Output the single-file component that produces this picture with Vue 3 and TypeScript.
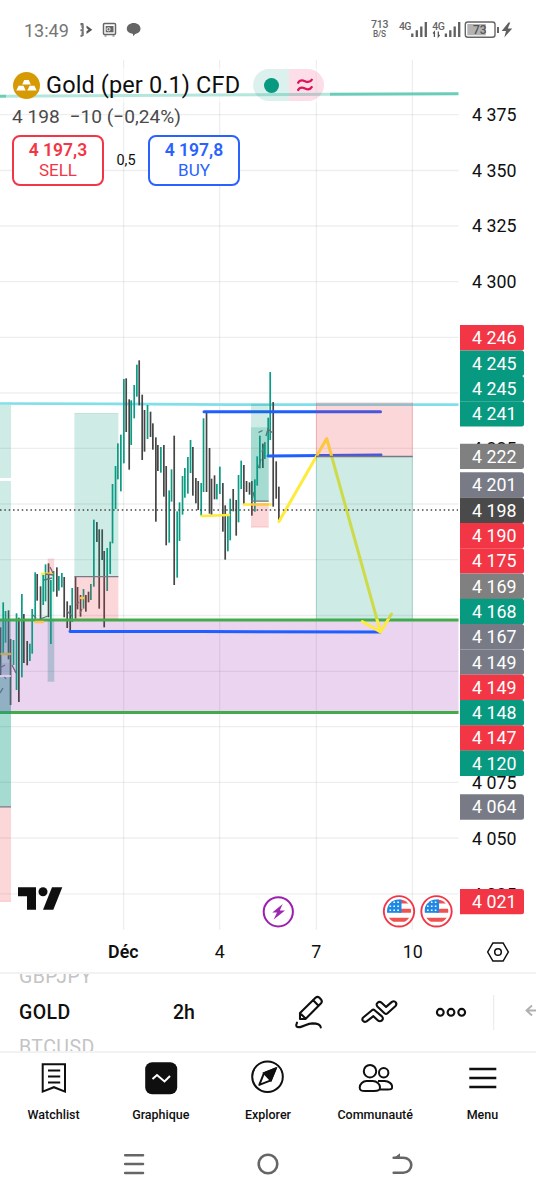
<script setup lang="ts">
type Candle = [x: number, high: number, low: number, up: 0 | 1]
interface Tag { y: number; text: string; tone: string }

const RED = '#f23645'
const GREEN = '#089981'
const GREY = '#808080'
const SLATE = '#787b86'

const gridX = [123.6, 219.6, 316.4, 412.4]
const gridY = [114.6, 170.5, 226, 281.6, 337.4, 393, 448.3, 504, 559.7, 615.5, 671.3, 726.6, 782.3, 838, 893.8]

const ticks = [
  { y: 114.6, text: '4 375' }, { y: 170.5, text: '4 350' }, { y: 226, text: '4 325' },
  { y: 281.6, text: '4 300' }, { y: 448.6, text: '4 225' }, { y: 782.6, text: '4 075' },
  { y: 838.2, text: '4 050' }, { y: 894.2, text: '4 025' },
]

const tags: Tag[] = [
  { y: 337.8, text: '4 246', tone: RED }, { y: 363.2, text: '4 245', tone: GREEN },
  { y: 388.6, text: '4 245', tone: GREEN }, { y: 413.9, text: '4 241', tone: GREEN },
  { y: 456.4, text: '4 222', tone: GREY }, { y: 484.9, text: '4 201', tone: SLATE },
  { y: 510.2, text: '4 198', tone: '#4a4a4a' }, { y: 535.6, text: '4 190', tone: RED },
  { y: 560.9, text: '4 175', tone: RED }, { y: 586.2, text: '4 169', tone: GREY },
  { y: 611.5, text: '4 168', tone: GREEN }, { y: 636.8, text: '4 167', tone: SLATE },
  { y: 662.1, text: '4 149', tone: SLATE }, { y: 687.4, text: '4 149', tone: RED },
  { y: 712.7, text: '4 148', tone: GREEN }, { y: 738, text: '4 147', tone: RED },
  { y: 763.3, text: '4 120', tone: GREEN }, { y: 807, text: '4 064', tone: SLATE },
  { y: 901.6, text: '4 021', tone: RED },
]

// Bars on a device-pixel grid: three units to one CSS pixel, y counted from 340.
const bars: Candle[] = [
  [1, 862, 1006, 0], [9, 787, 942, 1], [16, 813, 908, 1], [25, 811, 958, 0], [31, 897, 1095, 0],
  [40, 900, 975, 1], [49, 820, 1050, 1], [56, 833, 1086, 0], [65, 762, 1012, 1], [71, 822, 969, 0],
  [81, 903, 976, 0], [89, 911, 963, 1], [96, 807, 941, 1], [105, 697, 840, 1], [111, 702, 782, 0],
  [121, 739, 848, 0], [129, 705, 795, 1], [136, 673, 784, 1], [145, 670, 832, 0], [152, 720, 912, 1],
  [160, 693, 755, 1], [170, 682, 770, 0], [176, 708, 752, 1], [185, 699, 742, 1], [192, 711, 832, 0],
  [201, 784, 864, 0], [210, 796, 875, 0], [216, 744, 846, 1], [226, 710, 836, 0], [232, 741, 808, 0],
  [241, 765, 830, 0], [250, 747, 806, 1], [257, 765, 815, 0], [265, 755, 787, 0], [272, 732, 780, 1],
  [281, 539, 740, 1], [290, 546, 606, 0], [297, 568, 806, 0], [306, 568, 660, 0], [312, 633, 862, 0],
  [321, 624, 753, 1], [330, 605, 702, 1], [337, 432, 610, 1], [346, 378, 507, 1], [353, 310, 418, 1],
  [362, 284, 454, 1], [371, 117, 370, 1], [378, 115, 276, 0], [387, 178, 389, 0], [393, 181, 315, 1],
  [402, 135, 235, 1], [410, 74, 170, 1], [417, 61, 196, 0], [426, 164, 360, 0], [433, 210, 335, 0],
  [442, 195, 297, 1], [451, 215, 291, 0], [458, 250, 329, 0], [467, 292, 545, 0], [473, 315, 393, 0],
  [482, 321, 398, 1], [491, 315, 470, 0], [498, 378, 616, 0], [507, 451, 608, 1], [514, 388, 485, 1],
  [522, 287, 735, 0], [531, 514, 713, 1], [538, 487, 603, 1], [547, 408, 524, 1], [554, 384, 473, 1],
  [563, 351, 461, 1], [571, 300, 399, 1], [578, 321, 467, 0], [587, 414, 490, 0], [594, 423, 510, 0],
  [603, 429, 527, 1], [610, 235, 456, 1], [619, 215, 456, 0], [628, 324, 521, 0], [634, 416, 525, 0],
  [643, 406, 478, 0], [650, 432, 478, 1], [659, 380, 462, 1], [668, 429, 575, 0], [675, 496, 659, 0],
  [683, 524, 634, 1], [690, 476, 601, 1], [699, 447, 514, 0], [708, 480, 587, 0], [715, 405, 547, 1],
  [723, 362, 447, 1], [731, 375, 494, 0], [739, 423, 456, 0], [748, 427, 464, 0], [755, 423, 527, 0],
  [764, 418, 515, 1], [771, 349, 437, 1], [779, 287, 385, 1], [788, 311, 384, 0], [794, 308, 357, 1],
  [804, 233, 347, 1], [810, 96, 300, 1], [819, 186, 500, 0], [828, 364, 476, 0], [836, 440, 545, 0],
]
const candles = bars.map(([x, high, low, up]) => ({
  x: x / 3 - 0.65, y: 340 + high / 3, h: (low - high) / 3, fill: up ? '#0c9b83' : '#454545',
}))

const days = [
  { x: 123.3, text: 'Déc', strong: true }, { x: 219.7, text: '4', strong: false },
  { x: 316.3, text: '7', strong: false }, { x: 412.7, text: '10', strong: false },
]
const flags = [399, 436.5]
const tabs = ['Watchlist', 'Graphique', 'Explorer', 'Communauté', 'Menu']
</script>

<template>
  <div class="screen">
    <header class="status">
      <span class="clock">13:49</span>
      <svg class="notices" width="64" height="16" viewBox="0 0 64 16">
        <path d="M1.500 1h2.500v2.400h-2.500zm1 3h2v2h-2zm-1 3.200h2v2h-2zm1 3h2v2h-2zm-1 2.600h2v2h-2z" fill="#666" />
        <path d="M3.800 1.500v12.500" stroke="#777" stroke-width="1.800" />
        <path d="M7.500 3.500l5.800 4.200-5.800 4.200v-2.600l2-1.600-2-1.600z" fill="#555" />
        <rect x="24.500" y="1.500" width="12" height="11" rx="1" fill="none" stroke="#666" stroke-width="1.500" />
        <rect x="26.700" y="4" width="7.800" height="6.300" fill="#666" />
        <circle cx="29.500" cy="7.200" r="1.600" fill="#666" stroke="#fff" stroke-width=".9" />
        <path d="M33 4.500v5M25.500 14h2m6 0h2" stroke="#666" />
        <path d="M54.700 1c3.800 0 6.800 2.300 6.800 5.600 0 3.500-2.800 5-5.300 5.300L54 14.300v-2.400c-3.500-.3-6.200-2-6.200-5.300C47.800 3.300 51 1 54.700 1z" fill="#656565" />
      </svg>
      <svg class="signals" width="150" height="28" viewBox="366 16 150 28">
        <g fill="#666" font-size="10.500" font-weight="500">
          <text x="371" y="28" textLength="17.500">713</text>
          <text x="373" y="36.700" font-size="8.300" textLength="13">B/S</text>
          <text x="399" y="29.600" textLength="12.500">4G</text>
          <text x="432.300" y="29.600" textLength="12.500">4G</text>
        </g>
        <g stroke="#606060" stroke-width="2.300">
          <path d="M412.300 33.500V37M416.800 30.300V37M421.300 26.600V37M425.800 22V37" />
          <path d="M445.900 33.500V37M450.300 30.300V37M454.700 26.600V37M459.200 22V37" />
        </g>
        <path d="M434.400 37v-5l-1.300 1.500M438.300 31.500v5l1.300-1.500" fill="none" stroke="#555" stroke-width="1.300" />
        <rect x="465.300" y="22" width="29.700" height="15.300" rx="2.500" fill="#fff" stroke="#666" stroke-width="1.400" />
        <rect x="467.300" y="24" width="18.500" height="11.300" fill="#b3b3b3" />
        <path d="M498 27v6" stroke="#666" stroke-width="2" />
        <text x="473" y="34" font-size="12" font-weight="500" fill="#555" textLength="13.500">73</text>
        <path d="M508.500 22.500L501.700 31h4.300l-1.700 6.500 8-9h-4.500l2.500-6z" fill="#606060" />
      </svg>
    </header>

    <main class="chart">
      <svg class="plot" width="536" height="912" viewBox="0 60 536 912">
        <defs>
          <clipPath id="disc"><circle r="12" /></clipPath>
        </defs>
        <g stroke="#000" stroke-opacity=".065" stroke-width="1.300">
          <line v-for="x in gridX" :key="x" :x1="x" :x2="x" y1="60" y2="930" />
          <line v-for="y in gridY" :key="y" x1="0" x2="458.500" :y1="y" :y2="y" />
        </g>

        <path d="M0 96.200L330 94.300 458.500 93.700" fill="none" stroke="#6accb9" stroke-width="3" />
        <path d="M0 403.500L110 403.800 230 404.600H458.500" fill="none" stroke="#80dfe9" stroke-width="2.700" />
        <rect x="0" y="620" width="458.500" height="92.500" fill="#9c27b0" fill-opacity=".2" />

        <g>
          <rect v-for="c in candles" :key="c.x" :x="c.x" :y="c.y" width="1.700" :height="c.h" :fill="c.fill" />
        </g>

        <path d="M0 620H458.500M0 712.500H458.500" stroke="#43ac4a" stroke-width="2.800" />
        <g stroke="#1f5eff" stroke-width="3" stroke-linecap="round" fill="none">
          <path d="M204 411.700H380.500M268 456L381 454.900M70 631.400L200 631.600 380 632" />
        </g>

        <g stroke="#ffeb3b" stroke-width="3" stroke-linecap="round" stroke-linejoin="round" fill="none">
          <path d="M279 521.500L326.700 438.500 380.500 632M362.300 621.500L380.500 632 391.500 614" />
          <path d="M201.500 516L229 515M244 504.600H270.500M42 573.700H52M81 598H83.500" stroke-width="2.500" />
          <path d="M35.500 622H43M1.500 654H10" stroke="#ffc14d" stroke-width="2.500" />
        </g>

        <g fill="none" stroke="#6c6c76" stroke-width="1.300">
          <path d="M33 615l3 3M40 619l8-3M44 580l8-2M50 567l3 6M45 574l8 1M67 611l5 5M80 613l2-4M76 605l3-3" />
          <path d="M258.500 432.500l4-2M266 436l2-7 4 3.500M258.500 468l2.500-9M252 500l2-8M262 452l3-10" />
          <path d="M12 665l4 8M0 668l5-3M4 676l2 3M0 693l3-5" stroke="#755b85" />
        </g>

        <g fill="#089981" fill-opacity=".2">
          <rect x="0" y="405" width="11" height="73" />
          <rect x="0" y="481" width="11" height="325.500" />
          <rect x="0" y="677.500" width="11" height="129" />
          <rect x="74.400" y="413.500" width="44" height="163" />
          <rect x="251" y="403.800" width="17.700" height="97.500" />
          <rect x="251" y="427.300" width="17.700" height="74" />
          <rect x="316" y="456.500" width="96.700" height="162.500" />
          <rect x="47.700" y="620" width="6.500" height="61.700" />
          <rect x="40" y="575" width="14" height="45" fill-opacity=".1" />
        </g>
        <rect x="0" y="621" width="11" height="91" fill="#787bb6" fill-opacity=".22" />
        <rect x="0" y="663" width="11" height="11.500" fill="#787bb6" fill-opacity=".18" />
        <path d="M0 676H11" stroke="#ebd4ef" stroke-width="1.500" />
        <rect x="47.700" y="621" width="6.500" height="60.700" fill="#787bb6" fill-opacity=".15" />
        <g fill="#f23645" fill-opacity=".2">
          <rect x="0" y="806.500" width="11" height="95" />
          <rect x="74.400" y="577" width="44" height="42" />
          <rect x="47.700" y="558.500" width="6.500" height="16" />
          <rect x="251" y="503" width="17.700" height="24.300" />
          <rect x="316" y="402.300" width="96.700" height="54" />
        </g>
        <g stroke="#777984" stroke-width="1.300">
          <path d="M0 806.800H11M74.400 576.700H118.400M251 501.200H268.700M316 456.500H412.700" />
        </g>
        <g fill="none" stroke-width="1" stroke-opacity=".18">
          <path d="M74.400 413.500H118.400M316.400 456V619M412.400 456V619" stroke="#089981" />
          <path d="M0 901.300H11M316.400 402.500V456M412.400 402.500V456M251 527H268.700" stroke="#f23645" />
        </g>
        <path d="M0 510H458" stroke="#444" stroke-width="1.500" stroke-dasharray="1.500 2.850" />

        <g fill="#0f0f0f">
          <path d="M18 887.200H36V909.700H27V896.200H18z" />
          <circle cx="43" cy="891.700" r="4.500" />
          <path d="M52 887.200H62.300L53.300 909.700H43z" />
        </g>

        <circle cx="278.300" cy="911.800" r="14.600" fill="#fff" stroke="#9c1fb0" stroke-width="2" />
        <path d="M282.700 904l-10.400 8.600h4.700l-3.300 6.900 11.300-9h-5.200z" fill="#9c27b0" />
        <g v-for="x in flags" :key="x" :transform="`translate(${x} 911.300)`">
          <circle r="15.200" fill="#fff" stroke="#f23645" stroke-width="1.900" />
          <g clip-path="url(#disc)">
            <path d="M0-9.800H12M0-.500H12M-12 8.500H12" stroke="#ef5350" stroke-width="4" />
            <rect x="-12" y="-12" width="14.500" height="13.500" fill="#1e88e5" />
            <path d="M-9.500-9H2M-9.500-5H2M-9.500-1H2" stroke="#fff" stroke-width="1.600" stroke-dasharray="1.600 2.300" />
          </g>
        </g>

        <g class="axis">
          <text v-for="t in ticks" :key="t.text" x="472" :y="t.y + 6.400">{{ t.text }}</text>
          <g v-for="t in tags" :key="t.y">
            <path :d="`M460 ${t.y - 12.700}h61.500q2.500 0 2.500 2.500v20.400q0 2.500-2.500 2.500h-61.500z`" :fill="t.tone" />
            <text x="472" :y="t.y + 6.400" fill="#fff">{{ t.text }}</text>
          </g>
          <text
            v-for="d in days" :key="d.text" :x="d.x" y="957.800" text-anchor="middle"
            :font-weight="d.strong ? 600 : 400"
          >{{ d.text }}</text>
        </g>
        <g fill="none" stroke="#0f0f0f" stroke-width="1.500">
          <path d="M492.900 942.900h10.200l5.200 9.100-5.200 9.100h-10.200l-5.200-9.100z" />
          <circle cx="498" cy="952" r="3.300" />
        </g>
      </svg>

      <div class="legend">
        <div class="title-row">
          <svg width="27" height="27" viewBox="0 0 27 27">
            <circle cx="13.500" cy="13.500" r="13.500" fill="#d69a04" />
            <path d="M11.200 8h4.600l2 4.500h-8.600zM5.600 13.800h4.800l2.300 4.700H3.300zM16.600 13.800h4.800l2.300 4.700h-9.400z" fill="#fff" />
          </svg>
          <h1>Gold (per 0.1) CFD</h1>
          <div class="pills">
            <span class="pill-open"><i></i></span>
            <span class="pill-approx">
              <svg width="16" height="14" viewBox="0 0 16 14">
                <path d="M.7 5.500C2.500 1.800 5 1.800 8 3.200s5.500 1.200 7.300-2.200M.7 12.800C2.500 9.100 5 9.100 8 10.500s5.500 1.200 7.300-2.200" fill="none" stroke="#dc1458" stroke-width="2.200" />
              </svg>
            </span>
          </div>
        </div>
        <p class="quote"><span>4 198</span><span>−10 (−0,24%)</span></p>
        <div class="orders">
          <button class="sell"><b>4 197,3</b><span>SELL</span></button>
          <span class="spread">0,5</span>
          <button class="buy"><b>4 197,8</b><span>BUY</span></button>
        </div>
      </div>
    </main>

    <section class="tools">
      <div class="wheel">
        <span class="faint">GBPJPY</span>
        <span>GOLD</span>
        <span class="faint low">BTCUSD</span>
      </div>
      <span class="interval">2h</span>
      <svg class="tool-icons" width="256" height="50" viewBox="280 988 256 50">
        <g fill="none" stroke="#0f0f0f" stroke-width="2.100" stroke-linejoin="round" stroke-linecap="round">
          <path d="M300 1013l15.500-15.200q2-1.800 4 0l1.500 1.700q1.700 2-.2 4L305.500 1019h-5.500zM300.500 1013.500l5 5M313 1000l5.500 5.700" />
          <path d="M297 1022.700q-2.500 5 3 4.400c5-1 7-3.500 12.500-3.700 6 0 8 2 8.300 4" />
          <path d="M363.500 1017.200l8.500-7q1.300-1 2.600 0l7.300 6.200q2 2.300 0 4t-4 0l-4.500-4.200-6.800 5.100q-2.300 1.300-3.800-.7-1.200-1.900.7-3.400z" />
          <path d="M395.300 1006.300l-7.800 7q-1.500 1.200-3 0l-6.900-6.600q-2-2.300 0-4t4 0l4.500 4.200 5.800-5q2.300-1.500 3.900.5 1.300 2-.5 3.900z" />
          <circle cx="440.300" cy="1012.300" r="3.400" />
          <circle cx="451" cy="1012.300" r="3.400" />
          <circle cx="461.700" cy="1012.300" r="3.400" />
        </g>
        <path d="M493.700 995v35" stroke="#e8e8e8" />
        <path d="M532 1005.500l-5.500 5 5.500 5M526.500 1010.500H536" fill="none" stroke="#b0b0b0" stroke-width="1.900" />
      </svg>
    </section>

    <nav class="tabs">
      <a v-for="(tab, i) in tabs" :key="tab">
        <svg width="36" height="36" viewBox="-18 -18 36 36" fill="none" stroke="#0f0f0f" stroke-width="2">
          <template v-if="i === 0">
            <path d="M-11.300-13.700H11V13.600L-.1 9.200-11.300 13.600z" />
            <path d="M-6-7.600H6.200M-6-1.600H6.200M-6 4.400H6.200" />
          </template>
          <template v-else-if="i === 1">
            <rect x="-15.800" y="-15.800" width="32" height="32" rx="7" fill="#0f0f0f" stroke="none" />
            <path d="M-8.500 1L-4-3 3.500 3.500 9-2" stroke="#fff" />
          </template>
          <template v-else-if="i === 2">
            <circle cx="-.5" cy="-1.300" r="15.300" />
            <path d="M7.700-9.500L2.800 2.400-8.700 6.900-4-4.800z" stroke-linejoin="round" />
            <path d="M7.700-9.500L2.800 2.400-4-4.800z" fill="#0f0f0f" />
          </template>
          <template v-else-if="i === 3">
            <circle cx="-5" cy="-6.800" r="6.200" />
            <circle cx="8.700" cy="-5.300" r="4.700" />
            <path d="M-15.300 9.500C-15.300 6-12 3-8.500 3h6C2 3 5 6 5 9.500 5 12 4 13-1 13h-9c-4 0-5.300-.8-5.300-3.500zM3 3h6.500C14 3 17.200 6 17.200 9c0 2-2 2.500-4 2.500H5" />
          </template>
          <path v-else d="M-12.700-9H14.300M-12.700 0H14.300M-12.700 9H14.300" stroke-width="2.600" />
        </svg>
        <span>{{ tab }}</span>
      </a>
    </nav>

    <footer class="system">
      <svg width="24" height="24" viewBox="-12 -12 24 24"><path d="M-8.800-8.800H9M-8.800 0H9M-8.800 9H9" /></svg>
      <svg width="24" height="24" viewBox="-12 -12 24 24"><circle r="9.300" /></svg>
      <svg width="24" height="24" viewBox="-12 -12 24 24">
        <path d="M-8.300-6.300H1.200C6-6.300 9.300-3 9.300 1S6 8.800 1.200 8.800H-8.300" />
        <path d="M-9.500-5l7.500-5.700v3.500z" fill="#666" stroke="none" />
      </svg>
    </footer>
  </div>
</template>

<style>
body {
  margin: 0;
  background: #fff;
}
</style>

<style scoped>
.screen {
  width: 536px;
  height: 1200px;
  overflow: hidden;
  display: flex;
  flex-direction: column;
  background: #fff;
  color: #0f0f0f;
  font-family: Roboto, "Liberation Sans", sans-serif;
}
svg {
  display: block;
  flex: none;
}
.status {
  height: 60px;
  flex: none;
  display: flex;
  align-items: center;
  box-sizing: border-box;
  padding: 0 20px 0 24px;
}
.clock {
  font-size: 18px;
  color: #757575;
  width: 55px;
}
.signals {
  margin-left: auto;
}
.chart {
  position: relative;
  height: 912px;
  flex: none;
}
.axis {
  font-size: 17.8px;
  fill: #0f0f0f;
}
.legend {
  position: absolute;
  left: 6px;
  top: 8px;
}
.title-row {
  display: flex;
  align-items: center;
  height: 34px;
  width: 324px;
  padding-left: 7px;
  box-sizing: border-box;
  background: rgba(255, 255, 255, 0.5);
}
h1 {
  margin: 0 0 0 6px;
  width: 207px;
  font-size: 23.5px;
  font-weight: 400;
  letter-spacing: 0.12px;
  line-height: 34px;
  white-space: nowrap;
}
.pills {
  display: flex;
  height: 32px;
  width: 71px;
  border-radius: 16px;
  overflow: hidden;
}
.pills span {
  display: flex;
  flex: 1;
  align-items: center;
  justify-content: center;
}
.pill-open {
  background: rgba(8, 153, 129, 0.14);
}
.pill-open i {
  width: 15px;
  height: 15px;
  margin-left: 2px;
  border-radius: 50%;
  background: #089981;
}
.pill-approx {
  background: rgba(233, 30, 99, 0.15);
}
.pill-approx svg {
  margin-right: 3px;
}
.quote {
  margin: 1.5px 0 0 6px;
  width: 175px;
  display: flex;
  gap: 10px;
  white-space: nowrap;
  font-size: 19.1px;
  line-height: 25px;
  color: #4a4a4a;
}
.orders {
  display: flex;
  align-items: center;
  margin: 6.5px 0 0 6px;
}
.orders button {
  width: 92px;
  height: 51px;
  padding: 0 0 1px;
  box-sizing: border-box;
  display: flex;
  flex-direction: column;
  align-items: center;
  justify-content: center;
  background: #fff;
  border: 2px solid;
  border-radius: 8px;
  font-family: inherit;
  font-size: 17px;
  line-height: 20px;
}
.orders b {
  font-weight: 600;
  font-size: 17.5px;
}
.orders .sell {
  color: #f23645;
}
.orders .buy {
  color: #2962ff;
}
.spread {
  width: 44px;
  text-align: center;
  font-size: 14.5px;
}
.tools {
  height: 77px;
  flex: none;
  display: flex;
  align-items: center;
  border-top: 2px solid #f2f2f2;
  overflow: hidden;
}
.wheel {
  display: flex;
  flex-direction: column;
  justify-content: center;
  height: 77px;
  width: 154px;
  padding-left: 19px;
  overflow: hidden;
  font-size: 19.5px;
  font-weight: 500;
  letter-spacing: 0.45px;
  line-height: 35.5px;
}
.wheel .faint {
  font-weight: 400;
  color: #c4c4c4;
}
.interval {
  width: 107px;
  font-size: 19.5px;
  font-weight: 500;
}
.tabs {
  height: 77px;
  flex: none;
  display: flex;
  border-top: 2px solid #f2f2f2;
}
.tabs a {
  flex: 1;
  display: flex;
  flex-direction: column;
  align-items: center;
  padding-top: 7px;
}
.tabs span {
  margin-top: 11px;
  font-size: 12.5px;
  line-height: 16px;
  font-weight: 500;
}
.system {
  flex: 1;
  display: flex;
  justify-content: center;
  gap: 110px;
  padding-top: 22px;
  fill: none;
  stroke: #666;
  stroke-width: 2.6;
  stroke-linecap: round;
}
</style>
